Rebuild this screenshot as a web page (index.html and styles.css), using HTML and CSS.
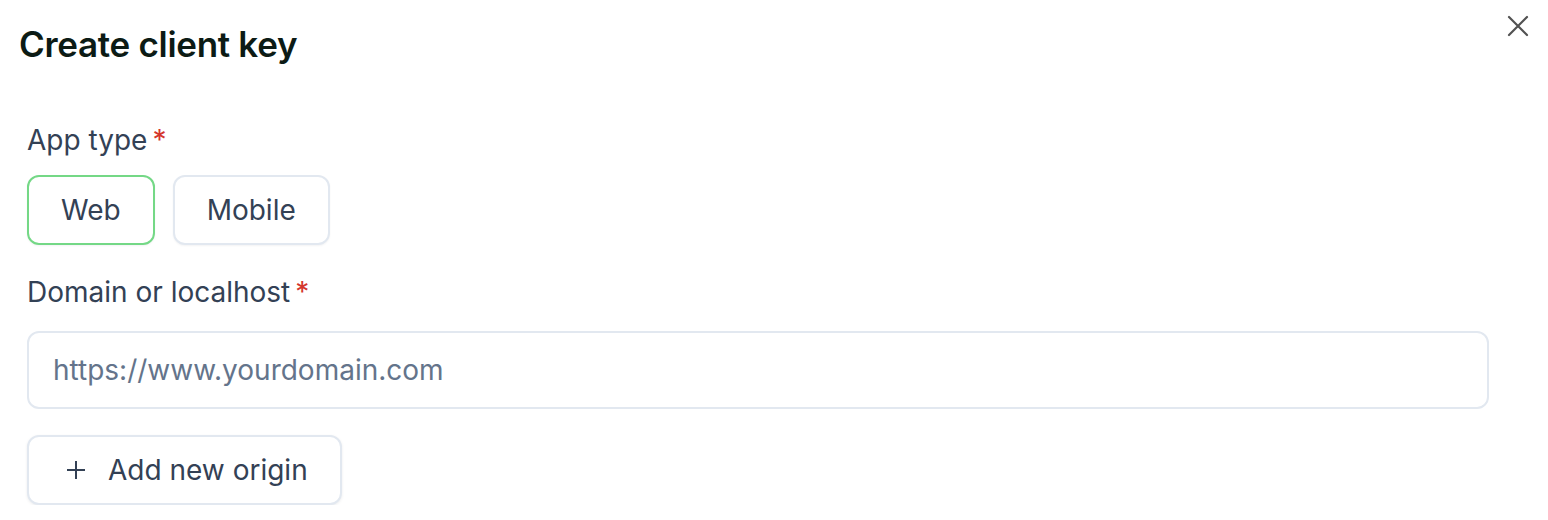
FILE: index.html
```html
<!DOCTYPE html>
<html>
<head>
<meta charset="utf-8">
<link rel="stylesheet" href="styles.css">
</head>
<body>
<div class="dialog">
  <div class="header">
    <h1 class="title">Create client key</h1>
    <button class="close" aria-label="Close">
      <svg width="22" height="22" viewBox="0 0 22 22"><path d="M2 2L20 20M20 2L2 20" stroke="#525252" stroke-width="2.2" stroke-linecap="round"/></svg>
    </button>
  </div>
  <div class="field">
    <div class="label">App type<span class="req">*</span></div>
    <div class="options">
      <button class="opt active">Web</button>
      <button class="opt">Mobile</button>
    </div>
  </div>
  <div class="field">
    <div class="label">Domain or localhost<span class="req">*</span></div>
    <input class="input" type="text" placeholder="https://www.yourdomain.com">
  </div>
  <button class="add">
    <svg width="20" height="20" viewBox="0 0 20 20"><path d="M10 1V19M1 10H19" stroke="#334155" stroke-width="2"/></svg>
    <span>Add new origin</span>
  </button>
</div>
</body>
</html>
```
FILE: styles.css
```css
html, body { margin: 0; padding: 0; background: #fff; }
body { font-family: Inter, "Noto Sans", sans-serif; }
.dialog { padding: 0 59px 0 27px; display: flex; flex-direction: column; }
.header { display: flex; justify-content: space-between; align-items: flex-start; margin-left: -8px; margin-right: -40px; }
.title { margin: 23px 0 0; font-size: 35px; font-weight: 600; color: #0c1b15; letter-spacing: -0.3px; line-height: 42px; }
.close { background: none; border: 0; padding: 0; margin: 15px 0 0; width: 22px; height: 22px; cursor: pointer; }
.field { display: flex; flex-direction: column; }
.label { font-size: 28px; color: #334155; line-height: 34px; margin-top: 58px; }
.field + .field .label { margin-top: 30px; }
.req { color: #d4362c; margin-left: 5px; }
.options { display: flex; gap: 18px; margin-top: 18px; }
.opt { box-sizing: border-box; height: 70px; border-radius: 12px; border: 2px solid #e2e8f0; background: #fff; font-family: inherit; font-size: 28px; color: #334155; padding: 0 32px; box-shadow: 0 1px 2px rgba(15,23,42,0.05); }
.opt.active { border-color: #74d886; }
.input { margin-top: 22px; height: 78px; box-sizing: border-box; border: 2px solid #e2e8f0; border-radius: 12px; padding: 0 24px; font-family: inherit; font-size: 28px; color: #334155; outline: none; }
.input::placeholder { color: #64748b; }
.add { box-sizing: border-box; align-self: flex-start; margin-top: 26px; height: 70px; display: flex; align-items: center; gap: 22px; padding: 0 32px 0 37px; border: 2px solid #e2e8f0; border-radius: 12px; background: #fff; font-family: inherit; font-size: 28px; color: #334155; box-shadow: 0 1px 3px rgba(15,23,42,0.08); }
```
